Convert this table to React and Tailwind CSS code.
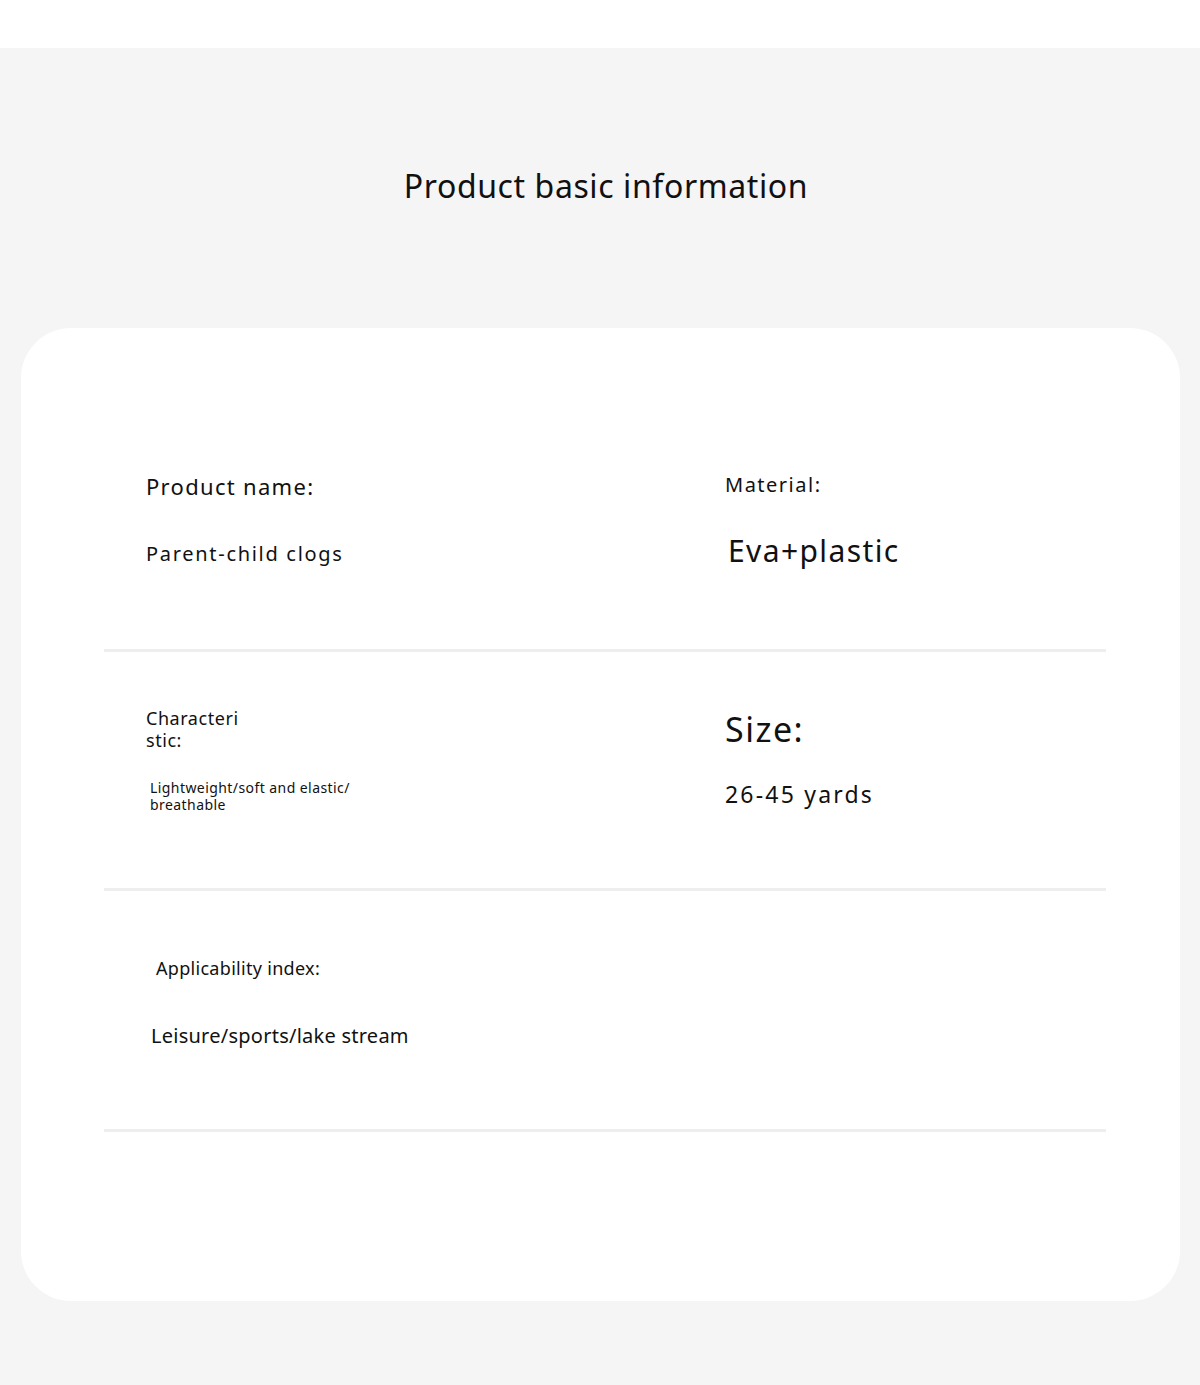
export default function App() {
  const font = { fontFamily: '"Noto Sans", "Open Sans", sans-serif' };
  return (
    <div className="w-[1200px] h-[1385px] flex flex-col bg-[#f5f5f5] text-[#111111]" style={font}>
      <div className="h-[48px] bg-white shrink-0" />
      <div className="flex flex-col">
        <h1 className="pt-[122px] pl-[12px] text-center text-[32px] leading-none font-normal tracking-[0.6px]">
          Product basic information
        </h1>
        <div className="mt-[126px] ml-[21px] w-[1159px] h-[973px] rounded-[50px] bg-white flex flex-col">
          {/* Row 1 */}
          <div className="h-[321px] grid grid-cols-[579px_1fr] pl-[125px]">
            <div className="flex flex-col pt-[147px]">
              <div className="text-[22px] leading-none tracking-[1.3px]">Product name:</div>
              <div className="mt-[47px] text-[20px] leading-none tracking-[1.7px]">Parent-child clogs</div>
            </div>
            <div className="flex flex-col pt-[147px]">
              <div className="text-[20px] leading-none tracking-[1.5px]">Material:</div>
              <div className="mt-[41px] ml-[3px] text-[30px] leading-none tracking-[1.4px]">Eva+plastic</div>
            </div>
          </div>
          <div className="ml-[83px] w-[1002px] h-[3px] bg-[#eeeeee]" />
          {/* Row 2 */}
          <div className="h-[236px] grid grid-cols-[579px_1fr] pl-[125px]">
            <div className="flex flex-col pt-[55px]">
              <div className="text-[18px] leading-[22px] tracking-[0.55px]">
                Characteri
                <br />
                stic:
              </div>
              <div className="mt-[28px] pl-[4px] text-[14px] leading-[17px] tracking-[0.43px]">
                Lightweight/soft and elastic/
                <br />
                breathable
              </div>
            </div>
            <div className="flex flex-col pt-[60px]">
              <div className="text-[34px] leading-none tracking-[1.5px]">Size:</div>
              <div className="mt-[37px] text-[23px] leading-none tracking-[2.2px]">26-45 yards</div>
            </div>
          </div>
          <div className="ml-[83px] w-[1002px] h-[3px] bg-[#eeeeee]" />
          {/* Row 3 */}
          <div className="h-[238px] flex flex-col pl-[125px] pt-[68px]">
            <div className="pl-[10px] text-[18px] leading-none tracking-[0.3px]">Applicability index:</div>
            <div className="mt-[49px] pl-[5px] text-[20px] leading-none tracking-[0.25px]">Leisure/sports/lake stream</div>
          </div>
          <div className="ml-[83px] w-[1002px] h-[3px] bg-[#eeeeee]" />
        </div>
      </div>
    </div>
  );
}
